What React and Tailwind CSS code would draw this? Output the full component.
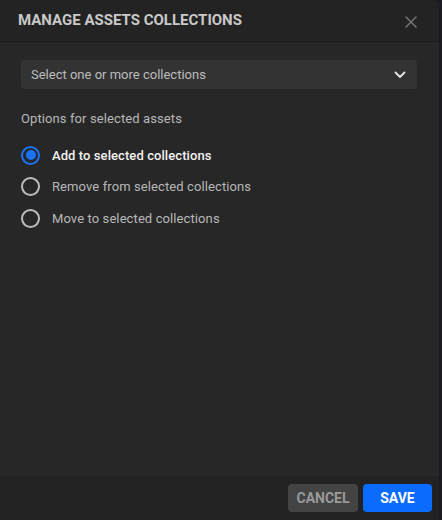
import React from "react";

function Radio({ checked, label }) {
  return (
    <label className="flex items-center gap-[12px] h-[31.5px] cursor-pointer">
      {checked ? (
        <span className="w-[19px] h-[19px] rounded-full border-[2px] border-[#1a73f5] flex items-center justify-center">
          <span className="w-[10px] h-[10px] rounded-full bg-[#1a73f5]" />
        </span>
      ) : (
        <span className="w-[19px] h-[19px] rounded-full border-[2px] border-[#bdbdbd]" />
      )}
      <span className={checked ? "text-[13px] font-medium text-[#f2f2f2] tracking-[0.08px]" : "text-[13px] text-[#b8b8b8] tracking-[0.1px]"}>{label}</span>
    </label>
  );
}

export default function App() {
  return (
    <div className="w-[442px] h-[520px] bg-[#1b1a20] flex" style={{ fontFamily: "Roboto, 'Liberation Sans', sans-serif" }}>
      <div className="w-[439px] h-full flex flex-col bg-[#272727] rounded-tr-[6px] overflow-hidden">
        <div className="h-[42px] shrink-0 bg-[#232323] border-b border-[#1c1c1c] flex items-center justify-between pl-[18px] pr-[22px]">
          <span className="text-[15px] font-bold text-[#c9c9c9]">MANAGE ASSETS COLLECTIONS</span>
          <svg width="12" height="12" viewBox="0 0 12 12" className="mt-[2px]">
            <path d="M1 1L11 11M11 1L1 11" stroke="#7a7a7a" strokeWidth="1.4" strokeLinecap="round" />
          </svg>
        </div>
        <div className="flex-1 px-[21px] pt-[18px]">
          <div className="h-[29px] w-[396px] rounded-[4px] bg-[#333333] flex items-center justify-between pl-[10px] pr-[11px]">
            <span className="text-[13px] text-[#bcbcbc]">Select one or more collections</span>
            <svg width="12" height="8" viewBox="0 0 12 8">
              <path d="M1.5 1.5L6 6L10.5 1.5" stroke="#e0e0e0" strokeWidth="2" fill="none" strokeLinecap="round" strokeLinejoin="round" />
            </svg>
          </div>
          <div className="mt-[20px] text-[13px] text-[#b8b8b8] tracking-[0.1px]">Options for selected assets</div>
          <div className="mt-[11px] flex flex-col">
            <Radio checked label="Add to selected collections" />
            <Radio label="Remove from selected collections" />
            <Radio label="Move to selected collections" />
          </div>
        </div>
        <div className="h-[44px] shrink-0 bg-[#222222] flex items-center justify-end gap-[5px] pr-[7px]">
          <button className="h-[28px] w-[70px] rounded-[4px] bg-[#434343] text-[14px] font-bold text-[#9a9a9a]">CANCEL</button>
          <button className="h-[28px] w-[69px] rounded-[4px] bg-[#0a6cff] text-[14px] font-bold text-white">SAVE</button>
        </div>
      </div>
    </div>
  );
}
